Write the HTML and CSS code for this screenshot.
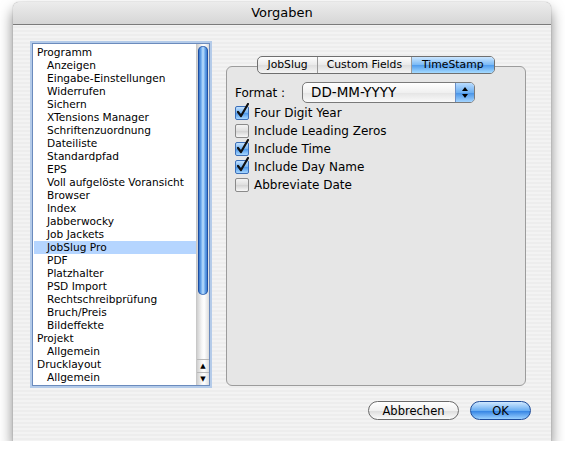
FILE: index.html
```html
<!DOCTYPE html>
<html lang="de">
<head>
  <meta charset="UTF-8">
  <title>Vorgaben</title>
  <link rel="stylesheet" href="styles.css">
</head>
<body>
  <div class="window">
    <div class="titlebar">Vorgaben</div>
    <div class="content">
      <div class="main">
        <div class="list">
          <ul class="items">
            <li class="top">Programm</li>
            <li>Anzeigen</li>
            <li>Eingabe-Einstellungen</li>
            <li>Widerrufen</li>
            <li>Sichern</li>
            <li>XTensions Manager</li>
            <li>Schriftenzuordnung</li>
            <li>Dateiliste</li>
            <li>Standardpfad</li>
            <li>EPS</li>
            <li>Voll aufgelöste Voransicht</li>
            <li>Browser</li>
            <li>Index</li>
            <li>Jabberwocky</li>
            <li>Job Jackets</li>
            <li class="selected">JobSlug Pro</li>
            <li>PDF</li>
            <li>Platzhalter</li>
            <li>PSD Import</li>
            <li>Rechtschreibprüfung</li>
            <li>Bruch/Preis</li>
            <li>Bildeffekte</li>
            <li class="top">Projekt</li>
            <li>Allgemein</li>
            <li class="top">Drucklayout</li>
            <li>Allgemein</li>
          </ul>
          <div class="scrollbar">
            <div class="track">
              <div class="thumb"></div>
            </div>
            <div class="arrow">&#9650;</div>
            <div class="arrow">&#9660;</div>
          </div>
        </div>

        <div class="pane">
          <div class="tabs">
            <div class="tab">JobSlug</div>
            <div class="tab">Custom Fields</div>
            <div class="tab active">TimeStamp</div>
          </div>
          <div class="groupbox">
            <div class="format-row">
              <span class="format-label">Format :</span>
              <div class="popup">
                <span class="popup-value">DD-MM-YYYY</span>
                <span class="popup-arrows">
                  <svg width="8" height="13" viewBox="0 0 8 13">
                    <path d="M4 1 L7 5 L1 5 Z" fill="#000"/>
                    <path d="M4 12 L7 8 L1 8 Z" fill="#000"/>
                  </svg>
                </span>
              </div>
            </div>
            <div class="checks">
              <label class="check"><span class="box on"><svg class="tick" width="14" height="16" viewBox="0 0 14 16"><path d="M2 9 L5 13 L12 1" fill="none" stroke="#111" stroke-width="2.2" stroke-linecap="round" stroke-linejoin="round"/></svg></span>Four Digit Year</label>
              <label class="check"><span class="box"></span>Include Leading Zeros</label>
              <label class="check"><span class="box on"><svg class="tick" width="14" height="16" viewBox="0 0 14 16"><path d="M2 9 L5 13 L12 1" fill="none" stroke="#111" stroke-width="2.2" stroke-linecap="round" stroke-linejoin="round"/></svg></span>Include Time</label>
              <label class="check"><span class="box on"><svg class="tick" width="14" height="16" viewBox="0 0 14 16"><path d="M2 9 L5 13 L12 1" fill="none" stroke="#111" stroke-width="2.2" stroke-linecap="round" stroke-linejoin="round"/></svg></span>Include Day Name</label>
              <label class="check"><span class="box"></span>Abbreviate Date</label>
            </div>
          </div>
        </div>
      </div>

      <div class="buttons">
        <button class="btn">Abbrechen</button>
        <button class="btn default">OK</button>
      </div>
    </div>
  </div>
</body>
</html>
```

FILE: styles.css
```css
body {
  margin: 0;
  background-color: #fff;
  font-family: "DejaVu Sans", Verdana, sans-serif;
  color: #000;
}

.window {
  width: 538px;
  height: 439px;
  margin: 2px 0 0 13px;
  border-radius: 6px 6px 0 0;
  background-color: #ececec;
  background-image: repeating-linear-gradient(to bottom, #ededed 0, #ededed 2px, #f3f3f3 2px, #f3f3f3 4px);
  box-shadow: 0 8px 14px rgba(0, 0, 0, 0.5), 0 0 1px rgba(0, 0, 0, 0.5);
  display: flex;
  flex-direction: column;
  overflow: hidden;
}

.titlebar {
  height: 22px;
  line-height: 22px;
  text-align: center;
  font-size: 13px;
  background: linear-gradient(to bottom, #ececec, #d6d6d6);
  border-bottom: 1px solid #7b7b7b;
  border-radius: 6px 6px 0 0;
}

.content {
  flex: 1;
  padding: 18px 20px 0 19px;
  display: flex;
  flex-direction: column;
}

.main {
  display: flex;
}

/* list on the left */
.list {
  width: 176px;
  height: 341px;
  border: 1px solid #6b8bbd;
  box-shadow: 0 0 0 2px #b4cbe9;
  background-color: #fff;
  display: flex;
}

.items {
  list-style: none;
  margin: 0;
  padding: 2px 0 0 1px;
  flex: 1;
  font-size: 10.6px;
}

.items li {
  height: 13px;
  line-height: 13px;
  padding-left: 13px;
  white-space: nowrap;
}

.items li.top {
  padding-left: 3px;
}

.items li.selected {
  background-color: #b5d5ff;
}

.scrollbar {
  width: 12px;
  display: flex;
  flex-direction: column;
  background: linear-gradient(to right, #cfcfcf, #f6f6f6 40%, #fff 60%, #dcdcdc);
  border-left: 1px solid #c8c8c8;
}

.track {
  flex: 1;
  padding: 2px 1px 0 1px;
}

.thumb {
  height: 249px;
  border-radius: 5px;
  background: linear-gradient(to right, #1f5cb8, #6aa8ec 30%, #bde0ff 50%, #5b9be4 75%, #2a66c0);
  box-shadow: inset 0 0 0 1px rgba(20, 60, 140, 0.6);
}

.arrow {
  height: 12px;
  line-height: 12px;
  font-size: 7px;
  text-align: center;
  border-top: 1px solid #b8b8b8;
}

/* right pane */
.pane {
  width: 302px;
  margin-left: 15px;
  margin-top: 13px;
  display: flex;
  flex-direction: column;
  align-items: center;
}

.tabs {
  display: flex;
  height: 16px;
  margin-bottom: -8px;
  position: relative;
  z-index: 1;
  border: 1px solid #6f6f6f;
  border-radius: 5px;
  background: linear-gradient(to bottom, #fdfdfd, #e9e9e9 50%, #dedede 51%, #f4f4f4);
  overflow: hidden;
}

.tab {
  font-size: 10.8px;
  line-height: 16px;
  padding: 0 9px;
  border-left: 1px solid #9a9a9a;
}

.tab:first-child {
  border-left: none;
}

.tab.active {
  padding: 0 10px;
  background: linear-gradient(to bottom, #cbe6ff, #79b9f5 50%, #4e9bed 51%, #a6dbff);
}

.groupbox {
  width: 300px;
  height: 320px;
  box-sizing: border-box;
  border: 1px solid #9c9c9c;
  border-radius: 6px;
  background-color: #e6e6e6;
  padding: 15px 0 0 8px;
}

.format-row {
  display: flex;
  align-items: center;
  height: 21px;
}

.format-label {
  font-size: 12px;
  width: 67px;
}

.popup {
  width: 171px;
  height: 19px;
  border: 1px solid #7a7a7a;
  border-radius: 5px;
  background: linear-gradient(to bottom, #fff, #f0f0f0 50%, #e4e4e4 51%, #fafafa);
  display: flex;
  overflow: hidden;
}

.popup-value {
  flex: 1;
  font-size: 13.5px;
  line-height: 19px;
  padding-left: 8px;
}

.popup-arrows {
  width: 18px;
  display: flex;
  justify-content: center;
  align-items: center;
  border-left: 1px solid #6a8fc8;
  background: linear-gradient(to bottom, #b9dcff, #6eb0f2 50%, #4591e6 51%, #a3d4ff);
}

.checks {
  display: flex;
  flex-direction: column;
  margin-top: 1px;
}

.check {
  display: flex;
  align-items: center;
  height: 18px;
  font-size: 12px;
}

.box {
  width: 12px;
  height: 12px;
  margin: 0 5px 0 0;
  border: 1px solid #8a8a8a;
  border-radius: 2px;
  background: linear-gradient(to bottom, #f4f4f4, #dedede 50%, #d2d2d2 51%, #f8f8f8);
  position: relative;
}

.box.on {
  border-color: #3c6fb8;
  background: linear-gradient(to bottom, #c4e2ff, #72b2f2 50%, #4b96ea 51%, #a8d8ff);
}

.tick {
  position: absolute;
  left: 0;
  top: -4px;
}

/* bottom buttons */
.buttons {
  display: flex;
  justify-content: flex-end;
  gap: 11px;
  margin-top: 15px;
}

.btn {
  height: 19px;
  border: 1px solid #6a6a6a;
  border-radius: 10px;
  font-family: "DejaVu Sans", Verdana, sans-serif;
  font-size: 11.5px;
  padding: 0;
  background: linear-gradient(to bottom, #fff, #f0f0f0 50%, #dcdcdc 51%, #fbfbfb);
  width: 91px;
}

.btn.default {
  width: 61px;
  border-color: #1f4d9a;
  background: linear-gradient(to bottom, #cfe8ff, #6aaef3 50%, #2f80e2 51%, #9ad0ff);
}
```
